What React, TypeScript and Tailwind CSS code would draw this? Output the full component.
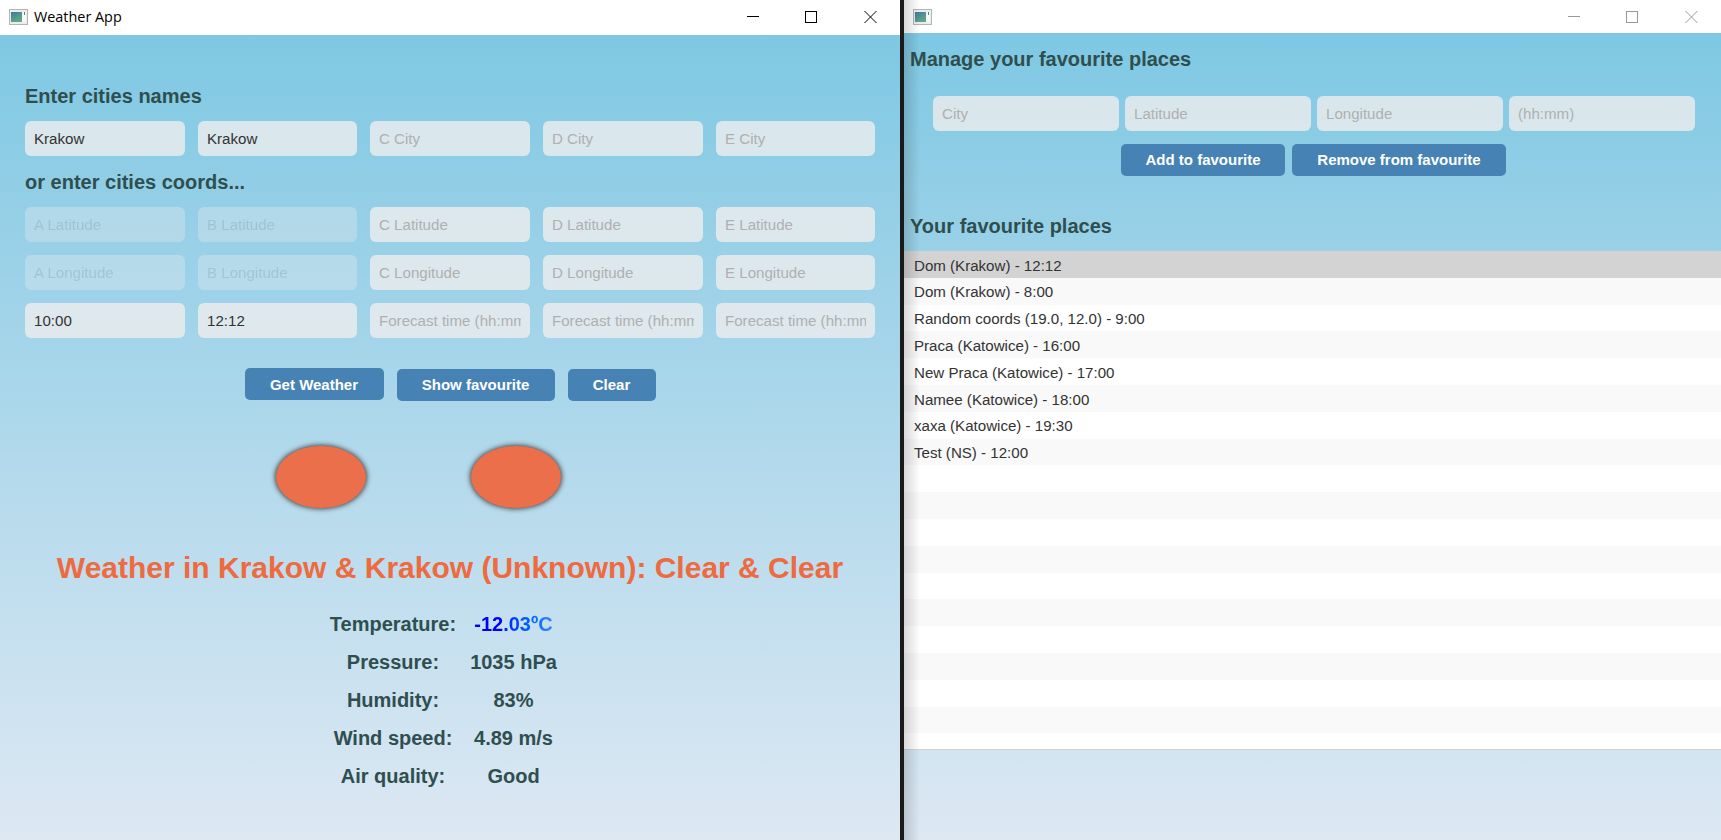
const font = "font-['Liberation_Sans',Arial,sans-serif]";

function WinIcon({ id }: { id: string }) {
  return (
    <svg width="19" height="16" viewBox="0 0 19 16" className="shrink-0">
      <defs>
        <linearGradient id={id} x1="0" y1="0" x2="0.6" y2="1">
          <stop offset="0" stopColor="#3f7a9f" />
          <stop offset="1" stopColor="#62a884" />
        </linearGradient>
      </defs>
      <rect x="0.5" y="0.5" width="18" height="15" fill="#ececec" stroke="#b4b4b4" />
      <rect x="2" y="3" width="11" height="10" fill={`url(#${id})`} />
      <rect x="13" y="3" width="4" height="10" fill="#f8f8f8" />
      <rect x="15" y="3" width="1" height="3" fill="#3f8f7f" />
    </svg>
  );
}

function Controls({ color }: { color: string }) {
  return (
    <div className="flex items-center ml-auto">
      <svg width="12" height="12" viewBox="0 0 12 12"><path d="M0 5.5H12" stroke={color} /></svg>
      <svg width="12" height="12" viewBox="0 0 12 12" className="ml-[46px]"><rect x="0.5" y="0.5" width="11" height="11" fill="none" stroke={color} /></svg>
      <svg width="13" height="12" viewBox="0 0 13 12" className="ml-[47px]"><path d="M0.5 0L12.5 12M12.5 0L0.5 12" stroke={color} /></svg>
    </div>
  );
}

function Field({ value, placeholder, disabled }: { value?: string; placeholder?: string; disabled?: boolean }) {
  return (
    <input
      readOnly
      value={value ?? ""}
      placeholder={placeholder}
      className={`h-[35px] w-full min-w-0 rounded-[6px] bg-[#ededed]/80 px-[9px] text-[15.1px] text-[#333333] outline-none placeholder:text-[#b0b0b0] placeholder:opacity-100 ${disabled ? "opacity-40" : ""}`}
    />
  );
}

function Btn({ children, w, className = "" }: { children: string; w: string; className?: string }) {
  return (
    <button className={`h-[32px] rounded-[5px] bg-[#4682b4] text-[15px] font-bold text-white ${w} ${className}`}>
      {children}
    </button>
  );
}

const rows: [string, React.ReactNode][] = [
  ["Temperature:", <span className="bg-gradient-to-r from-[#0000ff] from-[35%] to-[#3388ff] bg-clip-text text-transparent">-12.03ºC</span>],
  ["Pressure:", "1035 hPa"],
  ["Humidity:", "83%"],
  ["Wind speed:", "4.89 m/s"],
  ["Air quality:", "Good"],
];

const places = [
  "Dom (Krakow) - 12:12",
  "Dom (Krakow) - 8:00",
  "Random coords (19.0, 12.0) - 9:00",
  "Praca (Katowice) - 16:00",
  "New Praca (Katowice) - 17:00",
  "Namee (Katowice) - 18:00",
  "xaxa (Katowice) - 19:30",
  "Test (NS) - 12:00",
  ...Array(11).fill(""),
];

const grad = "bg-gradient-to-b from-[#7ec8e3] to-[#dde8f3]";
const cols = "grid grid-cols-[160px_159px_160px_160px_159px] gap-[13px]";

export default function App() {
  return (
    <div className={`flex h-[840px] w-[1721px] overflow-hidden bg-white ${font}`}>
      <div className="flex w-[900px] shrink-0 flex-col">
        <div className="flex h-[35px] shrink-0 items-center pl-[9px] pr-[23px] pb-[1px]">
          <WinIcon id="g1" />
          <span className="ml-[6px] font-['Open_Sans',sans-serif] text-[14.4px] text-black">Weather App</span>
          <Controls color="#000000" />
        </div>
        <div className={`flex flex-1 flex-col px-[25px] ${grad}`}>
          <h2 className="mt-[49px] h-[24px] text-[20px] font-bold leading-[24px] text-[#2f4f4f]">Enter cities names</h2>
          <div className={`mt-[13px] ${cols}`}>
            <Field value="Krakow" />
            <Field value="Krakow" />
            <Field placeholder="C City" />
            <Field placeholder="D City" />
            <Field placeholder="E City" />
          </div>
          <h2 className="mt-[14px] h-[24px] text-[20px] font-bold leading-[24px] text-[#2f4f4f]">or enter cities coords...</h2>
          <div className={`mt-[13px] ${cols}`}>
            <Field placeholder="A Latitude" disabled />
            <Field placeholder="B Latitude" disabled />
            <Field placeholder="C Latitude" />
            <Field placeholder="D Latitude" />
            <Field placeholder="E Latitude" />
            <Field placeholder="A Longitude" disabled />
            <Field placeholder="B Longitude" disabled />
            <Field placeholder="C Longitude" />
            <Field placeholder="D Longitude" />
            <Field placeholder="E Longitude" />
            <Field value="10:00" />
            <Field value="12:12" />
            <Field placeholder="Forecast time (hh:mm)" />
            <Field placeholder="Forecast time (hh:mm)" />
            <Field placeholder="Forecast time (hh:mm)" />
          </div>
          <div className="mt-[30px] flex h-[33px] items-start justify-center gap-[13px]">
            <Btn w="w-[139px]" className="pt-[2px]">Get Weather</Btn>
            <Btn w="w-[158px]" className="mt-[1px]">Show favourite</Btn>
            <Btn w="w-[88px]" className="mt-[1px]">Clear</Btn>
          </div>
          <div className="mt-[45px] flex justify-center gap-[105px] pr-[64px]">
            <div className="h-[62px] w-[90px] rounded-[50%] bg-[#ea6f4a] shadow-[0_0_5px_1px_#444444]" />
            <div className="h-[62px] w-[90px] rounded-[50%] bg-[#ea6f4a] shadow-[0_0_5px_1px_#444444]" />
          </div>
          <h1 className="mt-[41px] h-[38px] whitespace-nowrap text-center text-[30px] font-bold leading-[38px] text-[#ee6a3f]">
            Weather in Krakow &amp; Krakow (Unknown): Clear &amp; Clear
          </h1>
          <div className="mt-[18px] grid auto-rows-[38px] grid-cols-[127px_114px] items-center justify-center text-center text-[20px] font-bold text-[#2f4f4f]">
            {rows.map(([k, v]) => (
              <div key={k} className="contents">
                <div>{k}</div>
                <div>{v}</div>
              </div>
            ))}
          </div>
        </div>
      </div>
      <div className="w-[4px] shrink-0 bg-[#1a1a1a]" />
      <div className="relative flex min-w-0 flex-1 flex-col">
        <div className="flex h-[33px] shrink-0 items-center pl-[9px] pr-[23px]">
          <WinIcon id="g2" />
          <Controls color="#999999" />
        </div>
        <div className={`flex flex-1 flex-col ${grad}`}>
          <h2 className="ml-[6px] mt-[14px] h-[24px] text-[20px] font-bold leading-[24px] text-[#2f4f4f]">Manage your favourite places</h2>
          <div className="ml-[29px] mr-[26px] mt-[25px] grid grid-cols-4 gap-[6px]">
            <Field placeholder="City" />
            <Field placeholder="Latitude" />
            <Field placeholder="Longitude" />
            <Field placeholder="(hh:mm)" />
          </div>
          <div className="ml-[217px] mt-[13px] flex gap-[7px]">
            <Btn w="w-[164px]">Add to favourite</Btn>
            <Btn w="w-[214px]">Remove from favourite</Btn>
          </div>
          <h2 className="ml-[6px] mt-[38px] h-[24px] text-[20px] font-bold leading-[24px] text-[#2f4f4f]">Your favourite places</h2>
          <ul className="mt-[13px] h-[499px] overflow-hidden border-b border-[#d3d3d3]">
            {places.map((p, i) => (
              <li
                key={i}
                className={`flex h-[26.8px] items-center pl-[10px] pt-[3px] text-[15.1px] text-[#333333] ${i === 0 ? "bg-[#d3d3d3]" : i % 2 ? "bg-[#f9f9f9]" : "bg-white"}`}
              >
                {p}
              </li>
            ))}
          </ul>
        </div>
        <div className="pointer-events-none absolute inset-y-0 left-0 w-[16px] bg-gradient-to-r from-black/15 to-transparent" />
      </div>
    </div>
  );
}
